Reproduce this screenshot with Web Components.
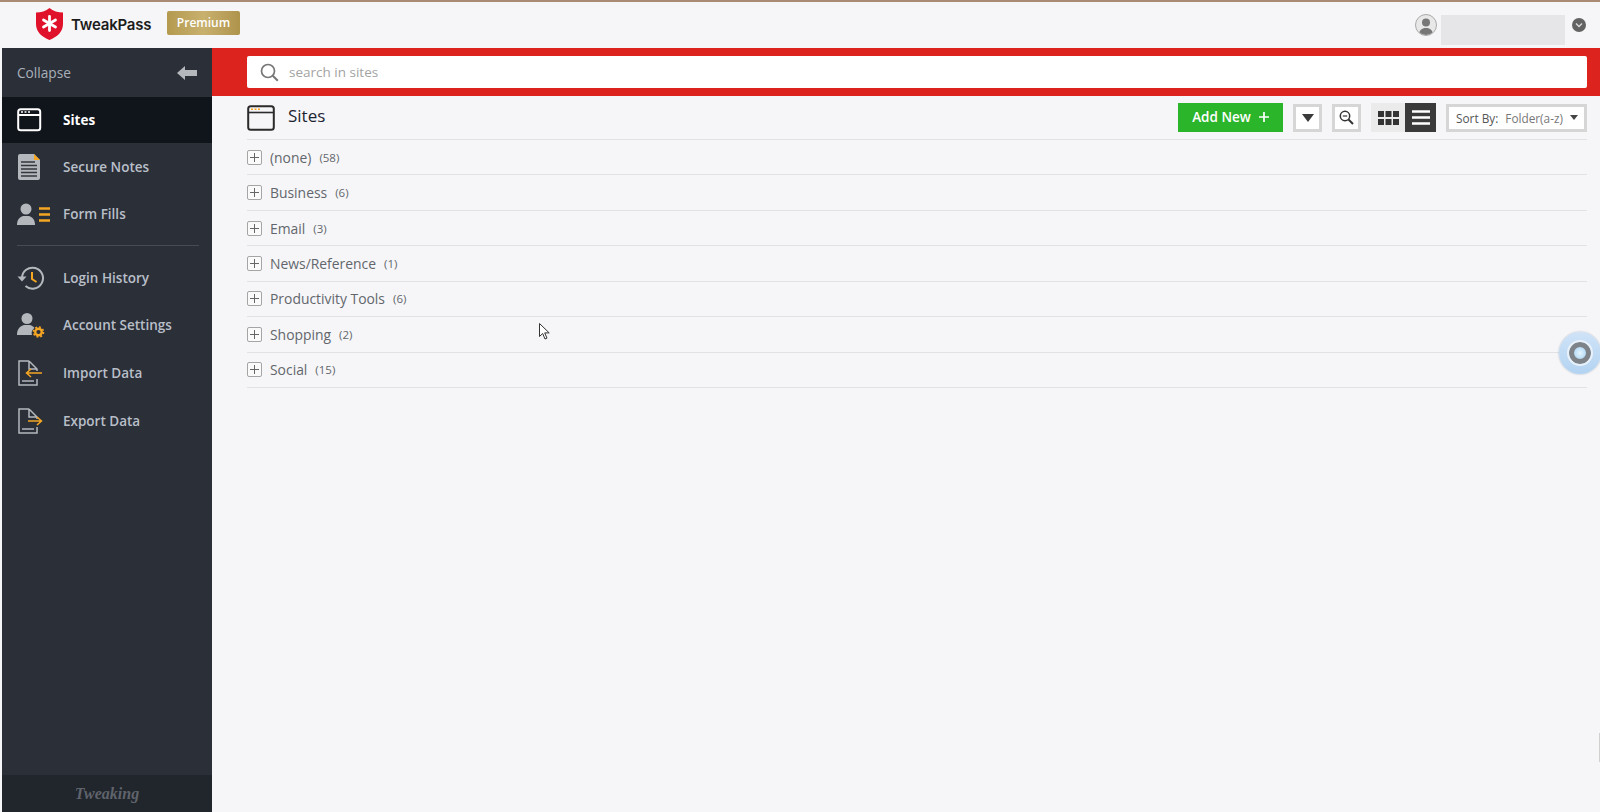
<!DOCTYPE html>
<html>
<head>
<meta charset="utf-8">
<title>TweakPass</title>
<style>
  html, body { margin: 0; height: 100%; background: #f6f6f8; overflow: hidden; }
  body { font-family: "Open Sans", "Liberation Sans", sans-serif; }
</style>
</head>
<body>
<tp-app></tp-app>

<script>
// 侧边栏图标
const ICONS = {
  sites: `<svg width="26" height="24" viewBox="0 0 26 24"><rect x="1.2" y="1.2" width="22" height="21" rx="2.5" fill="none" stroke="#fff" stroke-width="2"/><path d="M1.2 7h22" stroke="#fff" stroke-width="2"/><path d="M4 4h2M7.5 4h2M11 4h2" stroke="#fff" stroke-width="1.4"/></svg>`,
  notes: `<svg width="24" height="26" viewBox="0 0 24 26"><path d="M2 0h14l6 6v18a2 2 0 0 1-2 2H2a2 2 0 0 1-2-2V2a2 2 0 0 1 2-2z" fill="#b4b8bd" transform="translate(1 0)"/><path d="M17 0l6 6h-6z" fill="#f5a623"/><path d="M4 8h14M4 11.5h16M4 15h16M4 18.5h16M4 22h16" stroke="#33363d" stroke-width="1.3"/></svg>`,
  forms: `<svg width="34" height="24" viewBox="0 0 34 24"><circle cx="9" cy="7" r="5.5" fill="#b4b8bd"/><path d="M0 23c0-6 3-8 6-9h6c3 1 6 3 6 9z" fill="#b4b8bd"/><path d="M22 6.5h11M22 12.5h11M22 18.5h11" stroke="#f5a623" stroke-width="2.6"/></svg>`,
  history: `<svg width="28" height="26" viewBox="0 0 28 26"><path d="M5 13a10.5 10.5 0 1 1 3.5 8" fill="none" stroke="#b4b8bd" stroke-width="2"/><path d="M0.5 11.5h9l-4.5 5z" fill="#b4b8bd"/><path d="M15 7v7l4.5 3" fill="none" stroke="#f5a623" stroke-width="2"/></svg>`,
  account: `<svg width="28" height="26" viewBox="0 0 28 26"><circle cx="10" cy="6.5" r="5.5" fill="#b4b8bd"/><path d="M0 23c0-6 3-9 7-10h6c2 .5 3.5 1.5 4.5 3-2.5 1.5-3.5 4.5-2.5 7z" fill="#b4b8bd"/><circle cx="21.5" cy="20" r="3.3" fill="none" stroke="#f5a623" stroke-width="2.4"/><circle cx="21.5" cy="20" r="5" fill="none" stroke="#f5a623" stroke-width="1.6" stroke-dasharray="2 1.9"/></svg>`,
  importData: `<svg width="26" height="26" viewBox="0 0 26 26"><path d="M12 1H2v24h18v-6M12 1l8 8v2M12 1v8h8" fill="none" stroke="#b4b8bd" stroke-width="1.5"/><path d="M5 21h12" stroke="#b4b8bd" stroke-width="1.5"/><path d="M25 13H10M14 9l-4.5 4 4.5 4" fill="none" stroke="#f5a623" stroke-width="1.5"/></svg>`,
  exportData: `<svg width="26" height="26" viewBox="0 0 26 26"><path d="M12 1H2v24h18v-6M12 1l8 8v2M12 1v8h8" fill="none" stroke="#b4b8bd" stroke-width="1.5"/><path d="M5 21h12" stroke="#b4b8bd" stroke-width="1.5"/><path d="M11 13h13M20 9l4.5 4-4.5 4" fill="none" stroke="#f5a623" stroke-width="1.5"/></svg>`
};

// 顶部栏
class TpHeader extends HTMLElement {
  constructor() {
    super();
    const shadowRoot = this.attachShadow({ mode: "open" });
    shadowRoot.innerHTML = `
      <style>
        :host { display: flex; align-items: center; height: 48px; background: #f6f6f8; box-sizing: border-box; border-top: 2px solid #a98a73; padding-left: 36px; color: #1c1c1c; }
        .logo { margin-bottom: 2px; }
        .name { font: 600 15px "Inter", "Liberation Sans", sans-serif; letter-spacing: -.2px; margin: 0 0 2px 8px; width: 88px; }
        .badge { margin: 0 0 4px 8px; width: 73px; height: 24px; line-height: 23px; text-align: center; color: #fff; font-size: 12px; font-weight: 600; border-radius: 2px; background: linear-gradient(90deg, #b49a4f, #c8b06e 50%, #ae934b); }
        .user { margin-left: auto; display: flex; align-items: center; padding-right: 14px; }
        .avatar { width: 20px; height: 20px; border-radius: 50%; border: 1px solid #aaa; background: #e8e8e8; overflow: hidden; display: block; }
        .blur { width: 124px; height: 30px; background: #e6e6e8; margin: 10px 7px 0 4px; }
        .more { width: 14px; height: 14px; border-radius: 50%; background: #636363; display: flex; align-items: center; justify-content: center; }
      </style>
      <svg class="logo" width="27" height="32" viewBox="0 0 27 32"><path d="M13.5 0C17 3 22 4.5 27 4.5V16c0 8-6 13-13.5 16C6 29 0 24 0 16V4.5C5 4.5 10 3 13.5 0z" fill="#e0112b"/><path d="M13.5 8.5v14M7.5 12l12 7M19.5 12l-12 7" stroke="#fff" stroke-width="2.8" stroke-linecap="round"/></svg>
      <span class="name">TweakPass</span>
      <span class="badge">Premium</span>
      <div class="user">
        <svg class="avatar" viewBox="0 0 20 20"><circle cx="10" cy="7.5" r="4" fill="#777"/><path d="M3 20c0-5 3-6 5-7h4c2 1 5 2 5 7z" fill="#777"/></svg>
        <div class="blur"></div>
        <div class="more"><svg width="8" height="6" viewBox="0 0 8 6"><path d="M1 1.5l3 3 3-3" fill="none" stroke="#ddd" stroke-width="1.3"/></svg></div>
      </div>
    `;
  }
}

// 侧边栏菜单项
class TpNavItem extends HTMLElement {
  constructor() {
    super();
    const shadowRoot = this.attachShadow({ mode: "open" });
    shadowRoot.innerHTML = `
      <style>
        :host { display: flex; align-items: center; height: 47px; color: #b9bfc8; font-size: 13.5px; font-weight: 600; }
        :host([active]) { height: 46px; background: #10141b; color: #fff; font-weight: 700; }
        :host([tall]) { height: 47.6px; }
        .icon { width: 46px; margin-left: 15px; display: flex; align-items: center; }
      </style>
      <span class="icon">${ICONS[this.getAttribute("icon")]}</span>
      <slot></slot>
    `;
  }
}

// 侧边栏
class TpSidebar extends HTMLElement {
  constructor() {
    super();
    const shadowRoot = this.attachShadow({ mode: "open" });
    shadowRoot.innerHTML = `
      <style>
        :host { display: flex; flex-direction: column; width: 210px; margin-left: 2px; background: #2b2f38; flex: none; }
        .collapse { display: flex; align-items: center; justify-content: space-between; height: 49px; padding: 0 15px 0 15px; color: #a9b0ba; font-size: 13.7px; background: #2b2f38; }
        hr { border: 0; border-top: 1px solid #474b53; margin: 8px 13px 8px 15px; }
        .fill { flex: 1; }
        .foot { height: 37px; background: #21252c; display: flex; align-items: center; justify-content: center; color: #5f636b; font: italic 700 16px "Liberation Serif", serif; }
      </style>
      <div class="collapse">
        <span>Collapse</span>
        <svg width="20" height="14" viewBox="0 0 20 14"><path d="M0 7l8-7v4h12v6H8v4z" fill="#b4b8bd"/></svg>
      </div>
      <tp-nav-item icon="sites" active>Sites</tp-nav-item>
      <tp-nav-item icon="notes">Secure Notes</tp-nav-item>
      <tp-nav-item icon="forms">Form Fills</tp-nav-item>
      <hr>
      <tp-nav-item icon="history" tall>Login History</tp-nav-item>
      <tp-nav-item icon="account" tall>Account Settings</tp-nav-item>
      <tp-nav-item icon="importData" tall>Import Data</tp-nav-item>
      <tp-nav-item icon="exportData" tall>Export Data</tp-nav-item>
      <div class="fill"></div>
      <div class="foot">Tweaking</div>
    `;
  }
}

// 红色搜索条
class TpSearch extends HTMLElement {
  constructor() {
    super();
    const shadowRoot = this.attachShadow({ mode: "open" });
    shadowRoot.innerHTML = `
      <style>
        :host { display: block; background: #dc231e; padding: 8px 13px 8px 35px; }
        .box { display: flex; align-items: center; height: 32px; background: #fff; border-radius: 2px; color: #a3a3a3; font-size: 13.5px; padding-left: 13px; }
        svg { margin-right: 10px; }
      </style>
      <div class="box">
        <svg width="19" height="19" viewBox="0 0 19 19"><circle cx="8" cy="8" r="6.5" fill="none" stroke="#777" stroke-width="1.7"/><path d="M12.8 12.8l5 5" stroke="#777" stroke-width="2"/></svg>
        <span>search in sites</span>
      </div>
    `;
  }
}

// 工具栏
class TpToolbar extends HTMLElement {
  constructor() {
    super();
    const shadowRoot = this.attachShadow({ mode: "open" });
    shadowRoot.innerHTML = `
      <style>
        :host { display: flex; align-items: center; height: 43px; border-bottom: 1px solid #e2e2e4; color: #1b2430; }
        .title { font-size: 17px; margin: 0 0 4px 13px; }
        .tools { margin-left: auto; display: flex; align-items: center; height: 29px; }
        .add { width: 105px; height: 29px; padding-bottom: 1px; background: #2bb52b; color: #fff; font-size: 13.5px; font-weight: 600; display: flex; align-items: center; justify-content: center; gap: 8px; box-sizing: border-box; }
        .sq { width: 29px; height: 28px; border: 3px solid #d6d6d6; background: #fff; box-sizing: border-box; margin-left: 10px; display: flex; align-items: center; justify-content: center; }
        .grid { width: 34px; height: 29px; margin-left: 10px; background: #ebebeb; display: flex; align-items: center; justify-content: center; }
        .list { width: 31px; height: 29px; background: #3a3a3a; display: flex; align-items: center; justify-content: center; }
        .sort { width: 141px; height: 28px; border: 3px solid #d6d6d6; background: #fff; box-sizing: border-box; margin-left: 10px; font-size: 11.8px; color: #555; display: flex; align-items: center; padding-left: 7px; white-space: nowrap; }
        .sort b { font-weight: 400; color: #777; margin-left: 7px; }
        .sort svg { margin-left: 7px; }
      </style>
      <svg width="28" height="26" viewBox="0 0 28 26"><rect x="1.2" y="1.2" width="25.6" height="23.6" rx="2.5" fill="none" stroke="#2b2b2b" stroke-width="2"/><path d="M1.2 7.5h25.6" stroke="#2b2b2b" stroke-width="1.6"/><path d="M4 4.2h2M7.5 4.2h2M11 4.2h2" stroke="#f5a623" stroke-width="1.6"/></svg>
      <span class="title">Sites</span>
      <div class="tools">
        <div class="add"><span>Add New</span><svg width="10" height="10" viewBox="0 0 10 10"><path d="M5 0v10M0 5h10" stroke="#fff" stroke-width="1.7"/></svg></div>
        <div class="sq"><svg width="12" height="8" viewBox="0 0 12 8"><path d="M0 0h12L6 8z" fill="#3a3a3a"/></svg></div>
        <div class="sq"><svg width="15" height="15" viewBox="0 0 15 15"><circle cx="6" cy="6" r="4.7" fill="none" stroke="#333" stroke-width="1.5"/><path d="M3.8 6h4.4" stroke="#333" stroke-width="1.2"/><path d="M9.5 9.5l4.5 4.5" stroke="#333" stroke-width="2"/></svg></div>
        <div class="grid"><svg width="21" height="14" viewBox="0 0 21 14"><path d="M0 0h6v6H0zM7.5 0h6v6h-6zM15 0h6v6h-6zM0 8h6v6H0zM7.5 8h6v6h-6zM15 8h6v6h-6z" fill="#333"/></svg></div>
        <div class="list"><svg width="18" height="15" viewBox="0 0 18 15"><path d="M0 1.5h18M0 7.5h18M0 13.5h18" stroke="#fff" stroke-width="2.4"/></svg></div>
        <div class="sort"><span>Sort By:</span><b>Folder(a-z)</b><svg width="8" height="5" viewBox="0 0 8 5"><path d="M0 0h8L4 5z" fill="#444"/></svg></div>
      </div>
    `;
  }
}

// 文件夹行
class TpFolder extends HTMLElement {
  constructor() {
    super();
    const shadowRoot = this.attachShadow({ mode: "open" });
    shadowRoot.innerHTML = `
      <style>
        :host { display: flex; align-items: center; height: 35.45px; box-sizing: border-box; border-bottom: 1px solid #e2e2e4; color: #62666c; font-size: 13.9px; }
        .plus { width: 15px; height: 15px; box-sizing: border-box; border: 1px solid #a5a5a5; border-radius: 2px; background: #fafafa; margin-right: 8px; display: flex; align-items: center; justify-content: center; }
        .count { font-size: 11.5px; margin-left: 8px; }
      </style>
      <span class="plus"><svg width="9" height="9" viewBox="0 0 9 9"><path d="M4.5 0v9M0 4.5h9" stroke="#666" stroke-width="1"/></svg></span>
      <slot></slot>
      <span class="count">(${this.getAttribute("count")})</span>
    `;
  }
}

// 整体布局
class TpApp extends HTMLElement {
  constructor() {
    super();
    const shadowRoot = this.attachShadow({ mode: "open" });
    shadowRoot.innerHTML = `
      <style>
        :host { display: flex; flex-direction: column; height: 812px; position: relative; overflow: hidden; }
        .body { display: flex; flex: 1; min-height: 0; }
        main { flex: 1; min-width: 0; }
        .content { padding: 0 13px 0 35px; }
        .orb { position: absolute; left: 1559px; top: 332px; width: 42px; height: 42px; border-radius: 50%; background: linear-gradient(#cfe3f7, #b3d3f2); box-shadow: 0 0 2px #9ab; display: flex; align-items: center; justify-content: center; }
        .orb i { display: block; width: 22px; height: 22px; box-sizing: border-box; border-radius: 50%; border: 5px solid #7d8388; outline: 2px solid #e8f1fa; background: radial-gradient(#e6f6ff, #a3d0f2); }
        .cursor { position: absolute; left: 539px; top: 323px; }
        .scroll { position: absolute; right: 0; top: 733px; width: 1px; height: 29px; background: #d0d0d0; }
      </style>
      <tp-header></tp-header>
      <div class="body">
        <tp-sidebar></tp-sidebar>
        <main>
          <tp-search></tp-search>
          <div class="content">
            <tp-toolbar></tp-toolbar>
            <tp-folder count="58">(none)</tp-folder>
            <tp-folder count="6">Business</tp-folder>
            <tp-folder count="3">Email</tp-folder>
            <tp-folder count="1">News/Reference</tp-folder>
            <tp-folder count="6">Productivity Tools</tp-folder>
            <tp-folder count="2">Shopping</tp-folder>
            <tp-folder count="15">Social</tp-folder>
          </div>
        </main>
      </div>
      <div class="orb"><i></i></div>
      <svg class="cursor" width="12" height="18" viewBox="0 0 12 18"><path d="M.5.5v13l3.2-3 2.3 5.5 2-.9-2.3-5.2h4.5z" fill="#fff" stroke="#333" stroke-width="1"/></svg>
      <div class="scroll"></div>
    `;
  }
}

// 先注册子组件，再注册外层
customElements.define("tp-header", TpHeader);
customElements.define("tp-nav-item", TpNavItem);
customElements.define("tp-sidebar", TpSidebar);
customElements.define("tp-search", TpSearch);
customElements.define("tp-toolbar", TpToolbar);
customElements.define("tp-folder", TpFolder);
customElements.define("tp-app", TpApp);
</script>
</body>
</html>
